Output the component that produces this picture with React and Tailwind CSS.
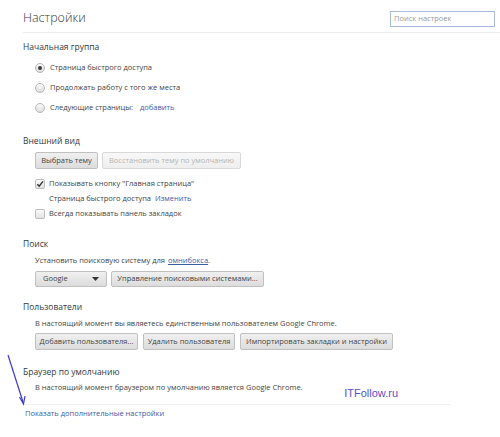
import React from "react";

const font = { fontFamily: "'Open Sans', 'Noto Sans', sans-serif" };

function Radio({ checked }) {
  return (
    <span className="w-[10px] h-[10px] rounded-full border border-[#b5b5b5] bg-gradient-to-b from-[#fafafa] to-[#dedede] flex items-center justify-center shrink-0">
      {checked && <span className="w-[4px] h-[4px] rounded-full bg-[#3c3c3c]" />}
    </span>
  );
}

function Check({ checked }) {
  return (
    <span className="w-[10px] h-[10px] rounded-[2px] border border-[#bcbcbc] bg-gradient-to-b from-[#fafafa] to-[#e2e2e2] flex items-center justify-center shrink-0">
      {checked && (
        <svg width="9" height="8" viewBox="0 0 9 8">
          <path d="M1.5 4.2 L3.6 6.4 L7.8 1" fill="none" stroke="#333" strokeWidth="1.6" />
        </svg>
      )}
    </span>
  );
}

function Btn({ w, children, disabled }) {
  return (
    <div
      className={`h-[17px] ${w} rounded-[2px] border flex items-center justify-center text-[7.5px] ${
        disabled
          ? "border-[#d8d8d8] bg-gradient-to-b from-[#f8f8f8] to-[#eeeeee] text-[#b4b4b4]"
          : "border-[#c0c0c0] bg-gradient-to-b from-[#f0f0f0] to-[#dcdcdc] text-[#444]"
      }`}
    >
      {children}
    </div>
  );
}

function Heading({ children, mt }) {
  return (
    <div className={`${mt} h-[14px] flex items-center pl-[23px] text-[8.5px] text-[#303942]`}>
      {children}
    </div>
  );
}

export default function App() {
  return (
    <div className="relative w-[500px] h-[437px] bg-white overflow-hidden text-[#444]" style={font}>
      {/* header */}
      <div className="h-[33px] ml-[23px] border-b border-[#eeeeee] flex items-end justify-between pr-[5px]">
        <span className="text-[12.5px] leading-[16px] pb-[6px] text-[#303942] font-light">Настройки</span>
        <div className="w-[105px] h-[16px] mb-[5px] border border-[#a9bbdb] bg-white flex items-center pl-[3px] text-[7.5px] text-[#999]">
          Поиск настроек
        </div>
      </div>

      <Heading mt="mt-[7px]">Начальная группа</Heading>
      <div className="mt-[4px] pl-[35px] flex flex-col text-[7.5px]">
        <div className="h-[20px] flex items-center gap-[5px]">
          <Radio checked />
          <span>Страница быстрого доступа</span>
        </div>
        <div className="h-[20px] flex items-center gap-[5px]">
          <Radio />
          <span>Продолжать работу с того же места</span>
        </div>
        <div className="h-[20px] flex items-center gap-[5px]">
          <Radio />
          <span>Следующие страницы:</span>
          <span className="ml-[2px] text-[#3b5ca8]">добавить</span>
        </div>
      </div>

      <Heading mt="mt-[16px]">Внешний вид</Heading>
      <div className="mt-[4px] pl-[35px] flex gap-[4px]">
        <Btn w="w-[63px]">Выбрать тему</Btn>
        <Btn w="w-[139px]" disabled>Восстановить тему по умолчанию</Btn>
      </div>
      <div className="mt-[8px] pl-[35px] flex flex-col gap-px text-[7.5px]">
        <div className="h-[14px] flex items-center gap-[4px]">
          <Check checked />
          <span>Показывать кнопку "Главная страница"</span>
        </div>
        <div className="h-[14px] flex items-center pl-[14px]">
          <span>Страница быстрого доступа</span>
          <span className="ml-[4px] text-[#3b5ca8]">Изменить</span>
        </div>
        <div className="h-[14px] flex items-center gap-[4px]">
          <Check />
          <span>Всегда показывать панель закладок</span>
        </div>
      </div>

      <Heading mt="mt-[16px]">Поиск</Heading>
      <div className="mt-[3px] pl-[35px] h-[14px] flex items-center text-[7.5px]">
        <span>Установить поисковую систему для</span>
        <span className="ml-[3px] text-[#3b5ca8] underline">омнибокса</span>
        <span>.</span>
      </div>
      <div className="mt-[3px] pl-[35px] flex gap-[4px]">
        <div className="h-[16px] w-[72px] rounded-[2px] border border-[#c0c0c0] bg-gradient-to-b from-[#f0f0f0] to-[#dcdcdc] flex items-center justify-between px-[7px] text-[7.5px] text-[#444]">
          <span>Google</span>
          <svg width="7" height="4" viewBox="0 0 7 4">
            <path d="M0 0 L7 0 L3.5 4 Z" fill="#333" />
          </svg>
        </div>
        <div className="h-[16px] w-[153px] rounded-[2px] border border-[#c0c0c0] bg-gradient-to-b from-[#f0f0f0] to-[#dcdcdc] flex items-center justify-center text-[7.5px] text-[#444]">
          Управление поисковыми системами...
        </div>
      </div>

      <Heading mt="mt-[13px]">Пользователи</Heading>
      <div className="mt-[3px] pl-[35px] h-[14px] flex items-center text-[7.5px]">
        В настоящий момент вы являетесь единственным пользователем Google Chrome.
      </div>
      <div className="mt-[2px] pl-[35px] flex gap-[5px]">
        <Btn w="w-[103px]">Добавить пользователя...</Btn>
        <Btn w="w-[92px]">Удалить пользователя</Btn>
        <Btn w="w-[153px]">Импортировать закладки и настройки</Btn>
      </div>

      <Heading mt="mt-[15px]">Браузер по умолчанию</Heading>
      <div className="mt-[2px] pl-[35px] h-[14px] flex items-center justify-between pr-[102px] text-[7.5px]">
        <span>В настоящий момент браузером по умолчанию является Google Chrome.</span>
        <span className="text-[11px] text-[#5a4fc8] translate-y-[5px]" style={{ fontFamily: "'Liberation Sans', Arial, sans-serif" }}>
          ITFollow.ru
        </span>
      </div>
      <div className="mt-[9px] ml-[23px] mr-[50px] border-t border-[#f0f0f0]" />
      <div className="mt-[2px] pl-[25px] h-[14px] flex items-center text-[7.5px] text-[#3b5ca8]">
        Показать дополнительные настройки
      </div>

      {/* annotation arrow */}
      <svg className="absolute left-0 top-0 pointer-events-none" width="500" height="437">
        <line x1="8" y1="355" x2="23" y2="402" stroke="#3b3bd0" strokeWidth="1.2" />
        <path d="M19.5 397 L23.5 404 L25 396" fill="none" stroke="#3b3bd0" strokeWidth="1.2" />
      </svg>
    </div>
  );
}
